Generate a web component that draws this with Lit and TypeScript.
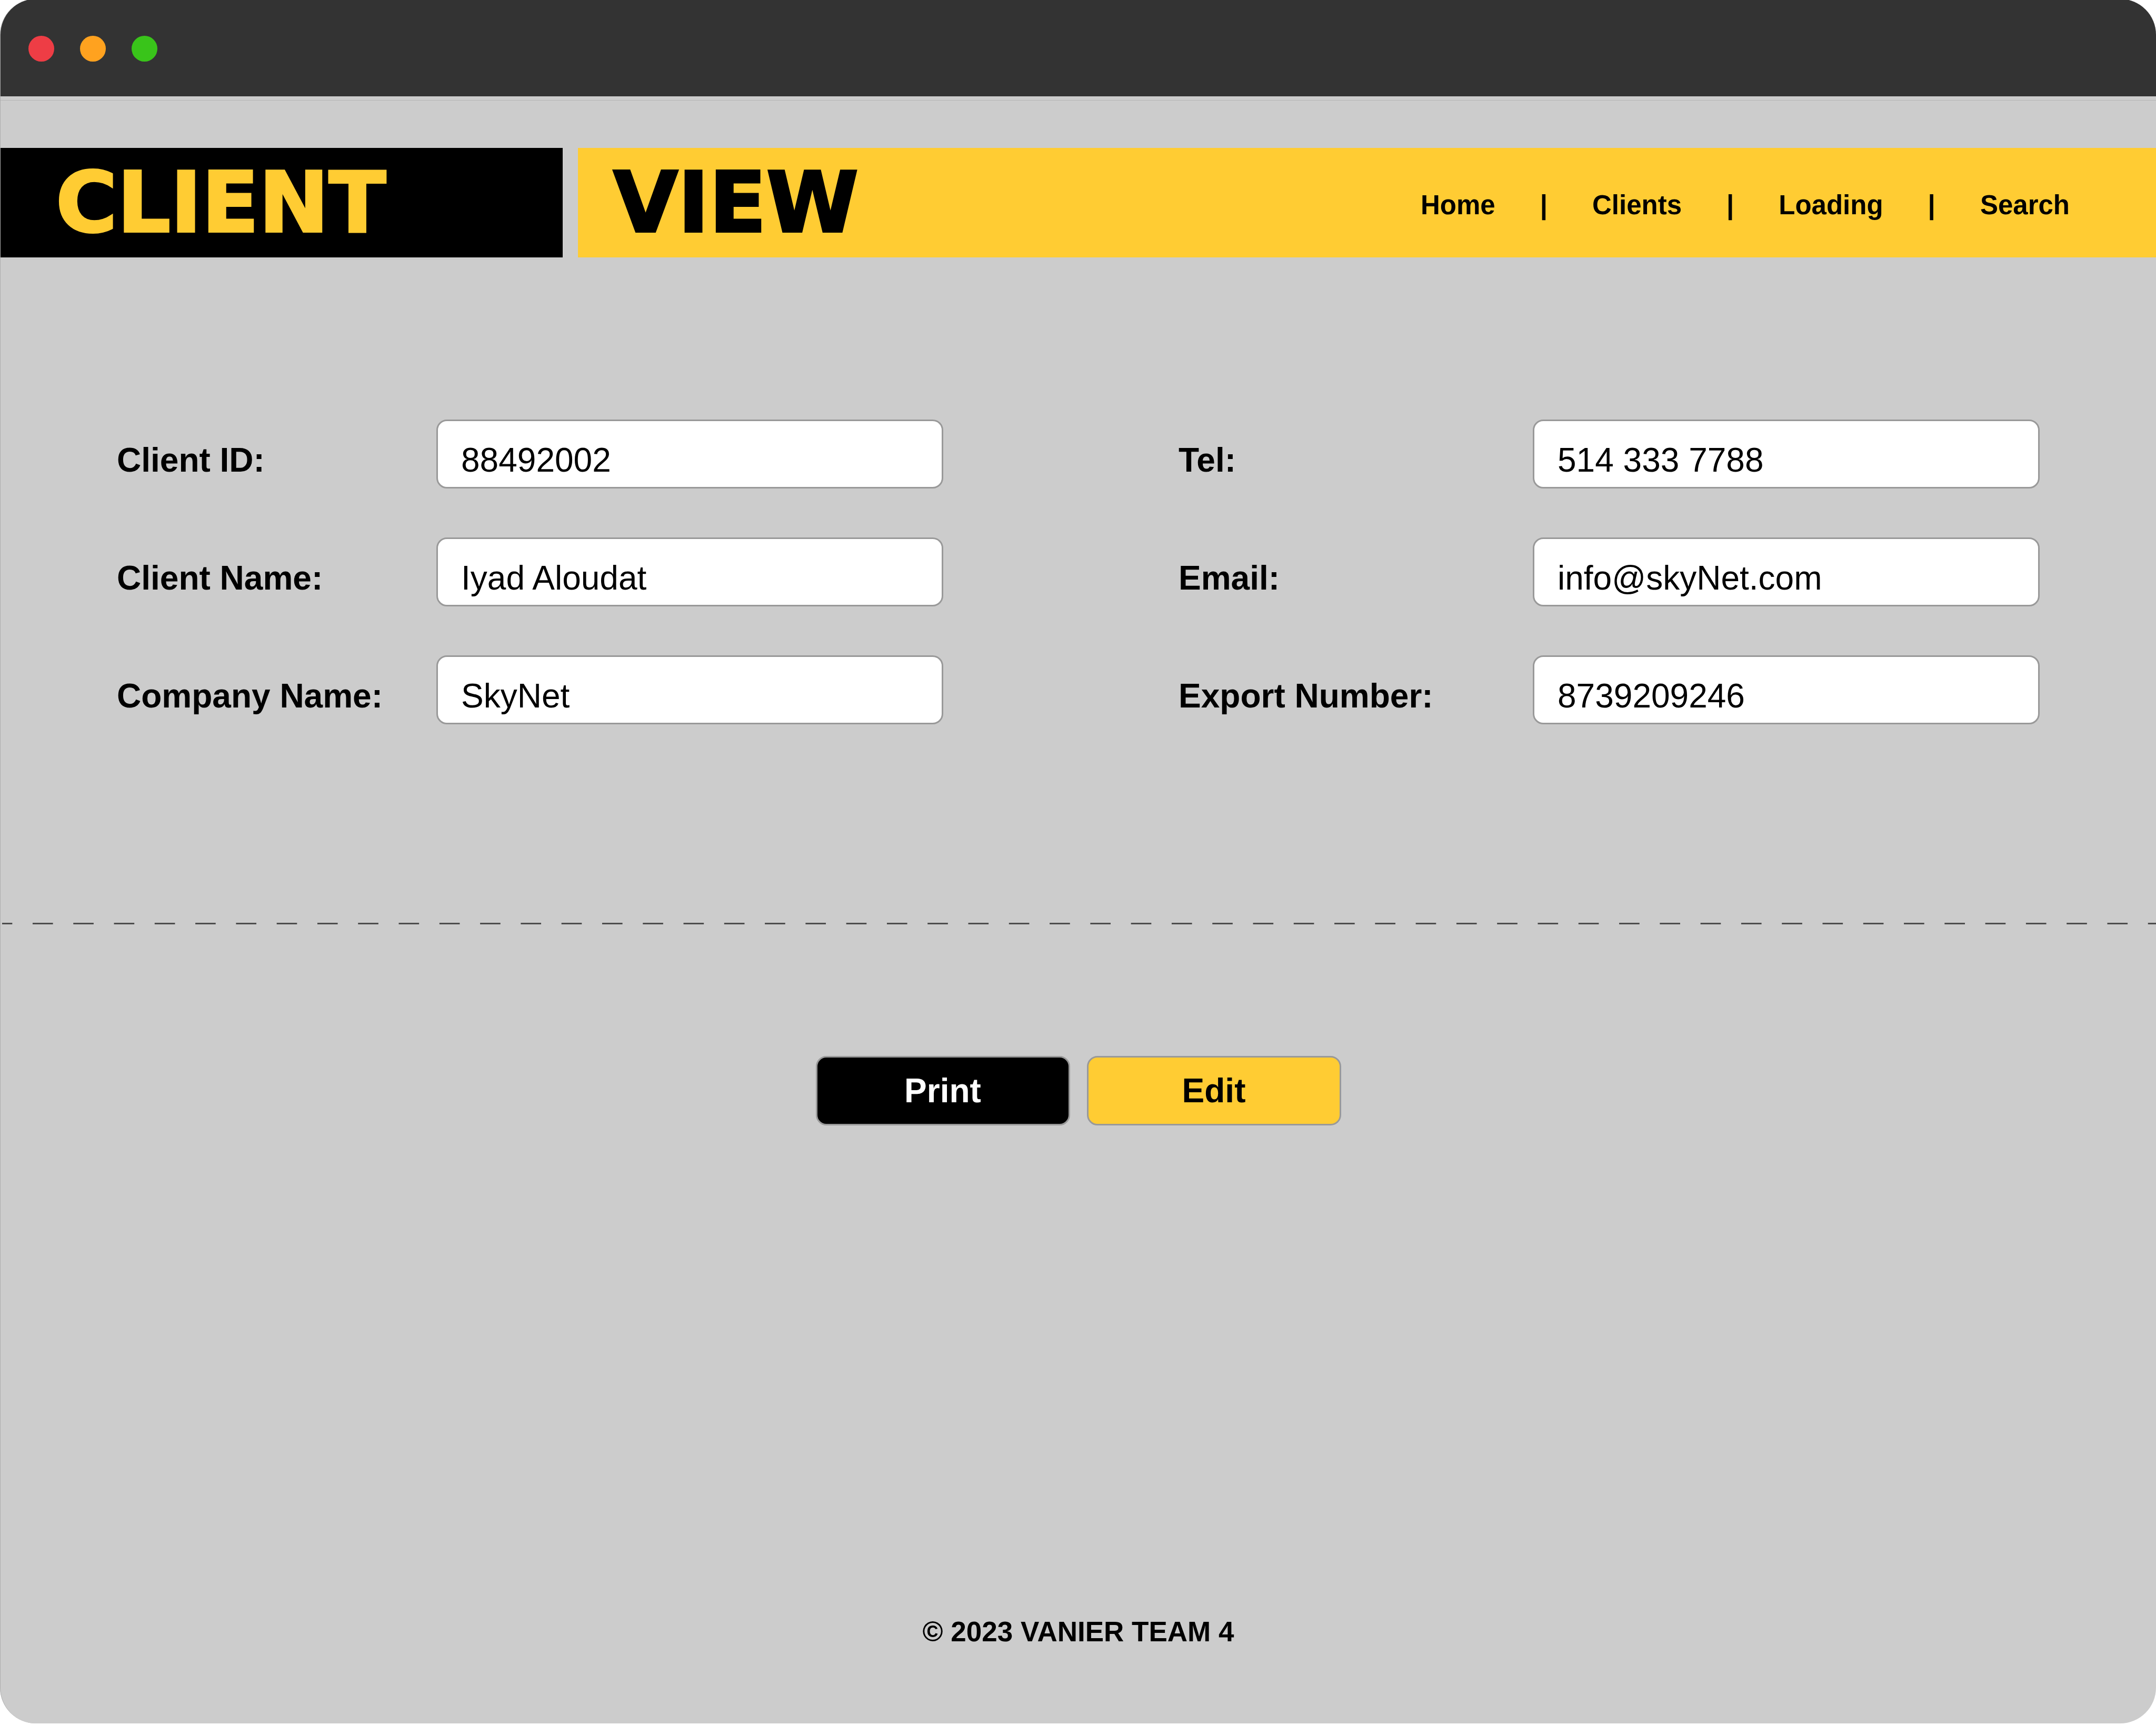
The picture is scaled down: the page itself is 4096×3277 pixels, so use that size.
import { LitElement, html, css } from "lit";
import { customElement, property } from "lit/decorators.js";

interface Field {
  id: string;
  label: string;
  value: string;
  type: string;
}

const identityFields: Field[] = [
  { id: "client-id", label: "Client ID:", value: "88492002", type: "text" },
  { id: "client-name", label: "Client Name:", value: "Iyad Aloudat", type: "text" },
  { id: "company-name", label: "Company Name:", value: "SkyNet", type: "text" },
];

const contactFields: Field[] = [
  { id: "tel", label: "Tel:", value: "514 333 7788", type: "tel" },
  { id: "email", label: "Email:", value: "info@skyNet.com", type: "email" },
  { id: "export-number", label: "Export Number:", value: "8739209246", type: "text" },
];

const navItems = ["Home", "Clients", "Loading", "Search"];

@customElement("window-bar")
export class WindowBar extends LitElement {
  static styles = css`
    :host {
      display: block;
    }
    .bar {
      box-sizing: border-box;
      display: flex;
      align-items: center;
      gap: 49px;
      height: 185px;
      padding: 4px 53px 0;
      background: #333333;
    }
    .dot {
      width: 49px;
      height: 49px;
      border-radius: 50%;
    }
    .close {
      background: #ee3d45;
    }
    .minimize {
      background: #ffa21f;
    }
    .maximize {
      background: #39c41a;
    }
    .seam {
      height: 1px;
      margin-top: 7px;
      background: #b5b5b5;
    }
  `;

  render() {
    return html`
      <div class="bar">
        <span class="dot close"></span>
        <span class="dot minimize"></span>
        <span class="dot maximize"></span>
      </div>
      <div class="seam"></div>
    `;
  }
}

@customElement("page-header")
export class PageHeader extends LitElement {
  static styles = css`
    :host {
      display: block;
    }
    .header {
      display: grid;
      grid-template-columns: 1068fr 2998fr;
      gap: 29px;
      height: 208px;
    }
    .brand,
    .banner {
      display: flex;
      align-items: center;
    }
    .brand {
      padding-left: 105px;
      background: #000000;
      color: #ffcc33;
    }
    .banner {
      justify-content: space-between;
      padding: 0 164px 0 67px;
      background: #ffcc33;
      color: #000000;
    }
    .title {
      margin: 0;
      font: 700 159px / 200px "DejaVu Sans", Verdana, sans-serif;
      -webkit-text-stroke: 4px currentColor;
    }
    .nav {
      display: flex;
      gap: 85px;
      padding-top: 10px;
      font: 700 51px / 60px "Liberation Sans", Arial, sans-serif;
    }
    .link {
      color: inherit;
      text-decoration: none;
    }
  `;

  render() {
    return html`
      <header class="header">
        <div class="brand"><h1 class="title">CLIENT</h1></div>
        <div class="banner">
          <h2 class="title">VIEW</h2>
          <nav class="nav">
            ${navItems.map(
              (item, i) => html`
                ${i > 0 ? html`<span aria-hidden="true">|</span>` : null}
                <a class="link" href="#${item.toLowerCase()}">${item}</a>
              `,
            )}
          </nav>
        </div>
      </header>
    `;
  }
}

@customElement("field-list")
export class FieldList extends LitElement {
  @property({ attribute: false }) fields: Field[] = [];

  static styles = css`
    :host {
      display: block;
      font-family: "Liberation Sans", Arial, sans-serif;
    }
    .list {
      display: grid;
      gap: 93px;
    }
    .row {
      display: grid;
      grid-template-columns: minmax(0, 1fr) 963px;
      align-items: center;
    }
    .label {
      padding-top: 22px;
      font-size: 64px;
      line-height: 72px;
      font-weight: 700;
      white-space: nowrap;
      color: #000000;
    }
    .input {
      box-sizing: border-box;
      width: 100%;
      height: 131px;
      margin: 0;
      padding: 22px 44px 0;
      border: 3px solid #999999;
      border-radius: 20px;
      background: #ffffff;
      color: #000000;
      font-family: inherit;
      font-size: 64px;
      line-height: 72px;
    }
  `;

  render() {
    return html`
      <div class="list">
        ${this.fields.map(
          (f) => html`
            <div class="row">
              <label class="label" for=${f.id}>${f.label}</label>
              <input class="input" id=${f.id} type=${f.type} .value=${f.value} />
            </div>
          `,
        )}
      </div>
    `;
  }
}

@customElement("app-root")
export class AppRoot extends LitElement {
  static styles = css`
    :host {
      display: block;
      overflow: hidden;
      background: #ffffff;
      color: #000000;
      font-family: "Liberation Sans", Arial, sans-serif;
    }
    .window {
      box-sizing: border-box;
      display: flex;
      flex-direction: column;
      min-height: calc(100vh - 1px);
      margin-top: -2px;
      border-left: 1px solid #adadad;
      border-radius: 68px;
      overflow: hidden;
      background: #cccccc;
    }
    .top {
      margin-top: 90px;
    }
    .form {
      display: grid;
      grid-template-columns: 1570fr 1636fr;
      gap: 447px;
      padding: 308px 221px 377px;
    }
    .divider {
      display: block;
      width: 100%;
      height: 3px;
    }
    .actions {
      display: flex;
      justify-content: center;
      gap: 32px;
      padding-top: 250px;
    }
    .button {
      box-sizing: border-box;
      width: 483px;
      height: 132px;
      margin: 0;
      padding: 0;
      border: 3px solid #999999;
      border-radius: 20px;
      font-family: inherit;
      font-size: 64px;
      line-height: 72px;
      font-weight: 700;
    }
    .print {
      background: #000000;
      color: #ffffff;
    }
    .edit {
      background: #ffcc33;
      color: #000000;
    }
    .footer {
      margin-top: auto;
      padding: 100px 0 144px;
      text-align: center;
      font-size: 53px;
      line-height: 60px;
      font-weight: 700;
    }
  `;

  render() {
    return html`
      <div class="window">
        <window-bar></window-bar>
        <page-header class="top"></page-header>
        <main>
          <form class="form">
            <field-list .fields=${identityFields}></field-list>
            <field-list .fields=${contactFields}></field-list>
          </form>
          <svg class="divider" aria-hidden="true">
            <line x1="3" y1="1.5" x2="100.1%" y2="1.5" pathLength="212" stroke="#4d4d4d"
              stroke-width="3" stroke-dasharray="2 2" stroke-dashoffset="1" />
          </svg>
          <div class="actions">
            <button class="button print" type="button">Print</button>
            <button class="button edit" type="button">Edit</button>
          </div>
        </main>
        <footer class="footer">© 2023 VANIER TEAM 4</footer>
      </div>
    `;
  }
}
